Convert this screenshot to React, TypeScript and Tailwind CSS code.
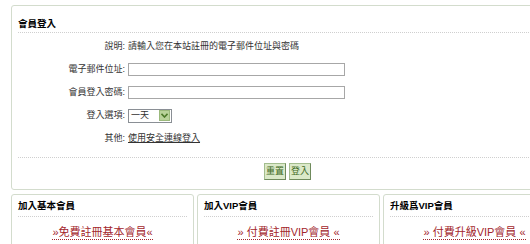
import React from 'react';

const font = { fontFamily: '"Liberation Sans", "Noto Sans CJK TC", sans-serif' };

interface Card {
  title: string;
  link: string;
}

const cards: Card[] = [
  { title: '加入基本會員', link: '»免費註冊基本會員«' },
  { title: '加入VIP會員', link: '» 付費註冊VIP會員 «' },
  { title: '升級爲VIP會員', link: '» 付費升級VIP會員 «' },
];

const Row: React.FC<{ label: string; children: React.ReactNode }> = ({ label, children }) => (
  <div className="flex items-center h-[23px]">
    <div className="w-[110px] text-right pr-[3px] shrink-0">{label}</div>
    <div className="flex items-center">{children}</div>
  </div>
);

const App: React.FC = () => {
  return (
    <div className="w-[530px] h-[244px] overflow-hidden bg-white text-[#333] text-[9px] leading-none" style={font}>
      <div className="w-[560px] pl-[11px] pt-[5px]">
        {/* login panel */}
        <div className="border border-[#d3dccd] rounded-[3px] px-[6px] pb-[9px]">
          <div className="h-[26px] flex items-end pb-[4px] font-bold text-[9.5px] text-black">會員登入</div>
          <div className="border-t border-dotted border-[#cfcfcf]" />
          <div className="pt-[2px]">
            <Row label="說明:">請輸入您在本站註冊的電子郵件位址與密碼</Row>
            <Row label="電子郵件位址:">
              <input className="w-[217px] h-[13px] border border-[#a7a7a7] bg-white outline-none" />
            </Row>
            <Row label="會員登入密碼:">
              <input type="password" className="w-[217px] h-[13px] border border-[#a7a7a7] bg-white outline-none" />
            </Row>
            <Row label="登入選項:">
              <div className="w-[44px] h-[14px] border border-[#8a8f95] bg-white flex items-center justify-between pl-[2px] pr-px">
                <span>一天</span>
                <span className="w-[11px] h-[11px] bg-[#b9d39a] border border-[#9bb97c] flex items-center justify-center">
                  <svg width="7" height="5" viewBox="0 0 7 5">
                    <path d="M0.5 0.8 L3.5 4 L6.5 0.8" fill="none" stroke="#4d7a2a" strokeWidth="1.6" />
                  </svg>
                </span>
              </div>
            </Row>
            <Row label="其他:">
              <span className="underline">使用安全連線登入</span>
            </Row>
          </div>
          <div className="mt-[7px] border-t border-dotted border-[#cfcfcf]" />
          <div className="flex justify-center gap-[3px] pt-[5px] pl-[4px]">
            <button className="w-[22px] h-[17px] bg-[#dbe9c9] border border-[#a3bd8e] border-r-[#6f8a5c] border-b-[#6f8a5c] text-[#3d6a1e] text-[9px]">重置</button>
            <button className="w-[22px] h-[17px] bg-[#dbe9c9] border border-[#a3bd8e] border-r-[#6f8a5c] border-b-[#6f8a5c] text-[#3d6a1e] text-[9px]">登入</button>
          </div>
        </div>

        {/* join cards */}
        <div className="grid grid-cols-3 gap-[3px] mt-[4px] w-[555px]">
          {cards.map((card, idx) => (
            <div key={idx} className="border border-[#d3dccd] rounded-[3px] px-[6px] h-[60px]">
              <div className="h-[21px] flex items-end pb-[6px] font-bold text-[9.5px] text-black">{card.title}</div>
              <div className="border-t border-dotted border-[#cfcfcf]" />
              <div className="flex justify-center pt-[10px]">
                <span className="text-[11px] text-[#a3262c] border-b border-dotted border-[#a3262c] pb-px">{card.link}</span>
              </div>
            </div>
          ))}
        </div>
      </div>
    </div>
  );
};

export default App;
